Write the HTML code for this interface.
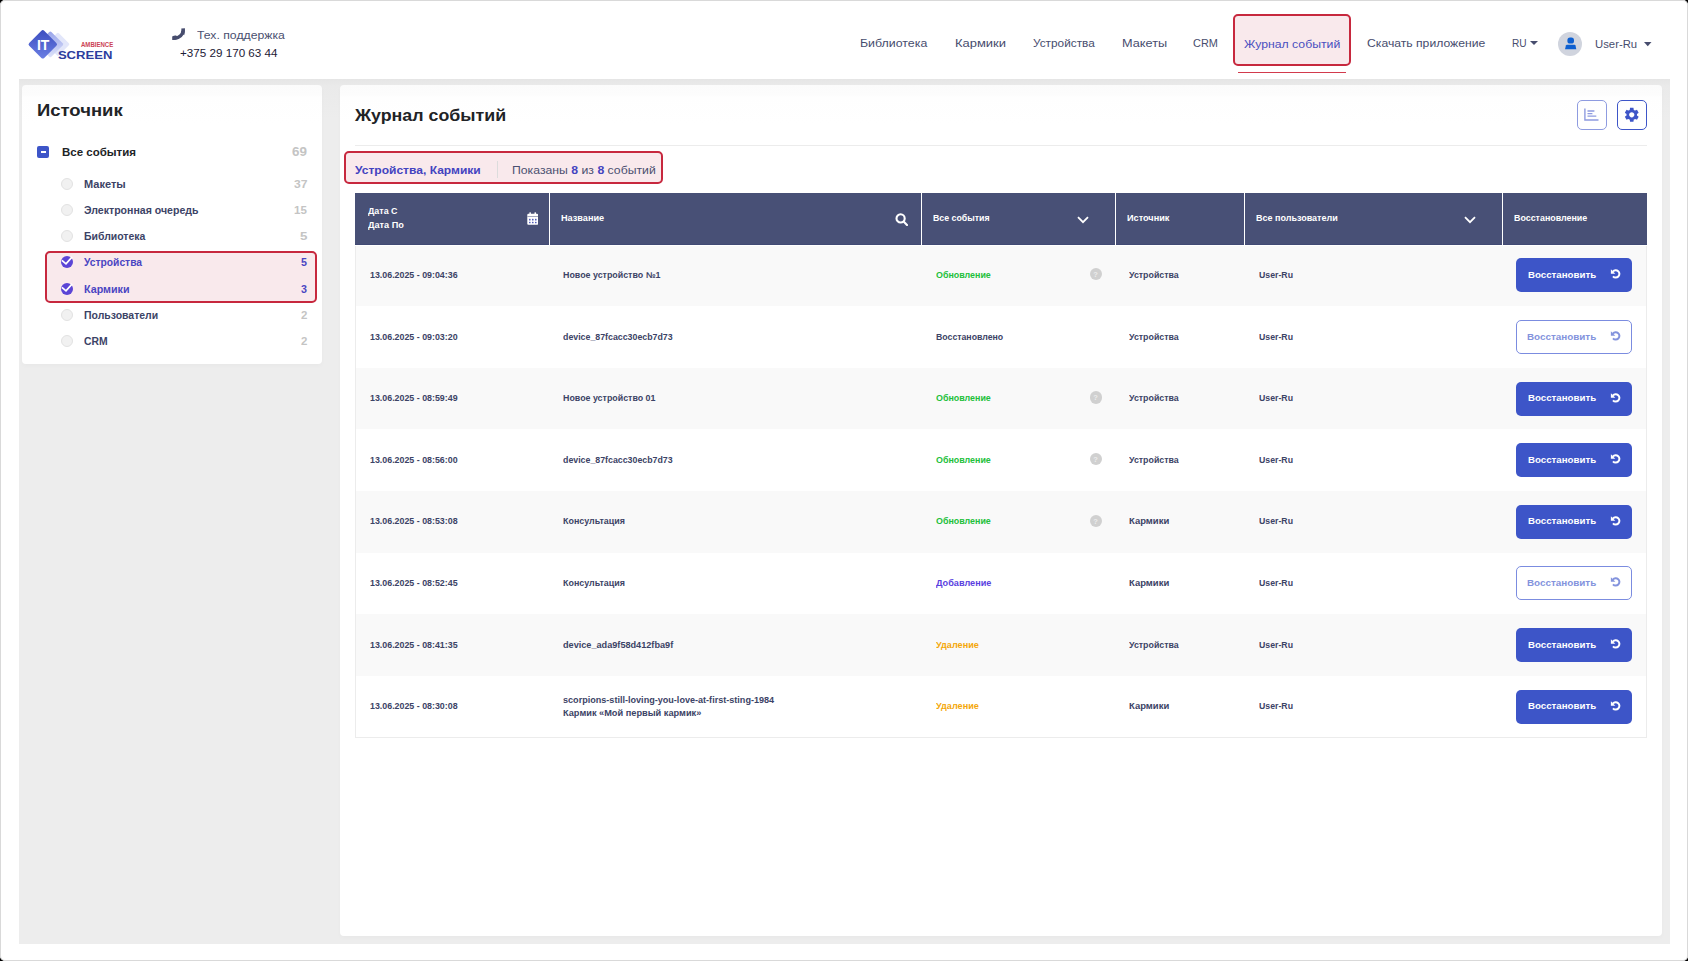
<!DOCTYPE html>
<html><head><meta charset="utf-8"><style>
html,body{margin:0;padding:0;}
body{width:1688px;height:961px;position:relative;overflow:hidden;background:#000;font-family:"Liberation Sans",sans-serif;}
.frame{position:absolute;left:0;top:0;width:1688px;height:961px;box-sizing:border-box;border:1px solid #d9d9d9;border-radius:5px;}
.a{position:absolute;}
.t{position:absolute;line-height:1;white-space:pre;transform-origin:0 0;}
.q{width:12.2px;height:12.2px;border-radius:50%;background:#d0d0d0;color:#ececec;font-size:7.5px;font-weight:700;line-height:13.4px;text-align:center;}
</style></head><body>
<div class="a" style="left:0;top:0;width:1688px;height:961px;background:#fff;border-radius:5px;"></div>
<div class="a" style="left:19px;top:79px;width:1651px;height:865px;background:linear-gradient(#e5e5e5,#eaeaea 7px,#ededed 40px);"></div>
<div class="a" style="left:22px;top:85px;width:300px;height:279px;background:linear-gradient(#fbfbfb,#fcfcfc 10px,#fefefe 12px,#fff 40px);border-radius:4px;box-shadow:0 2px 5px rgba(0,0,0,0.025);"></div>
<div class="a" style="left:340px;top:85px;width:1322px;height:851px;background:linear-gradient(#fbfbfb,#fcfcfc 10px,#fefefe 12px,#fff 40px);border-radius:4px;box-shadow:0 2px 5px rgba(0,0,0,0.025);"></div>
<svg class="a" style="left:20px;top:20px" width="100" height="50" viewBox="0 0 100 50">
<defs><linearGradient id="lg" x1="0" y1="0" x2="1" y2="1"><stop offset="0" stop-color="#3a4cbf"/><stop offset="1" stop-color="#6c80e4"/></linearGradient>
<linearGradient id="lg2" x1="0" y1="0" x2="1" y2="1"><stop offset="0" stop-color="#97a3ea"/><stop offset="1" stop-color="#dfe4fa"/></linearGradient></defs>
<rect x="29.4" y="15.8" width="17" height="17" rx="1.5" transform="rotate(45 37.9 24.3)" fill="#e2e6fa"/>
<rect x="20.8" y="14.9" width="19" height="19" rx="1.5" transform="rotate(45 30.3 24.4)" fill="url(#lg2)"/>
<rect x="12.2" y="13.7" width="21.2" height="21.2" rx="2" transform="rotate(45 22.8 24.3)" fill="url(#lg)"/>
<text x="16.9" y="29.6" font-family="Liberation Sans" font-weight="700" font-size="14.5" fill="#fff" textLength="12.4" lengthAdjust="spacingAndGlyphs">IT</text>
<text x="61" y="27" font-family="Liberation Sans" font-weight="700" font-size="6.6" fill="#cc4353" textLength="32.2" lengthAdjust="spacingAndGlyphs">AMBIENCE</text>
<text x="37.9" y="39.1" font-family="Liberation Sans" font-weight="700" font-size="11.4" fill="#2c3d9e" textLength="54.5" lengthAdjust="spacingAndGlyphs">SCREEN</text>
</svg>
<svg class="a" style="left:172px;top:28px" width="14" height="13" viewBox="0 0 14 13"><path d="M11 2.6 C11 6.6 7.5 10 2.6 10.3" stroke="#474d6e" stroke-width="3.4" fill="none"/><path d="M9.3 0.4 L12.8 0.3 C12.9 0.3 12.95 0.35 12.95 0.45 C13 3.2 12.9 5.3 12.1 7.2 L9.5 4.6 Z" fill="#474d6e"/><path d="M0.2 8.5 C1.4 7.9 3.2 7.4 4.2 7.5 L6.6 10.6 C4.8 11.6 2.7 12.2 0.6 12.1 C0.3 12.1 0.2 12 0.2 11.8 Z" fill="#474d6e"/></svg>
<div id="t0" class="t" style="left:196.58px;top:31.30px;font-size:10.39px;color:#4b5070;font-weight:400;transform:scaleX(1.1788);">Тех. поддержка</div>
<div id="t1" class="t" style="left:180.33px;top:47.59px;font-size:11.12px;color:#1c2035;font-weight:400;transform:scaleX(1.0486);">+375 29 170 63 44</div>
<div id="t2" class="t" style="left:859.99px;top:37.83px;font-size:10.83px;color:#474d6e;font-weight:400;transform:scaleX(1.1425);">Библиотека</div>
<div id="t3" class="t" style="left:954.98px;top:37.83px;font-size:10.83px;color:#474d6e;font-weight:400;transform:scaleX(1.1960);">Кармики</div>
<div id="t4" class="t" style="left:1032.87px;top:37.83px;font-size:10.83px;color:#474d6e;font-weight:400;transform:scaleX(1.0913);">Устройства</div>
<div id="t5" class="t" style="left:1121.68px;top:37.83px;font-size:10.83px;color:#474d6e;font-weight:400;transform:scaleX(1.1744);">Макеты</div>
<div id="t6" class="t" style="left:1193.00px;top:37.83px;font-size:10.83px;color:#474d6e;font-weight:400;transform:scaleX(1.0090);">CRM</div>
<div class="a" style="left:1233px;top:14px;width:118px;height:52px;box-sizing:border-box;border:2px solid #c7283e;border-radius:5px;background:#f9e9ec;"></div>
<div id="t7" class="t" style="left:1244.43px;top:39.13px;font-size:10.83px;color:#4a4fc0;font-weight:400;transform:scaleX(1.1310);">Журнал событий</div>
<div class="a" style="left:1238px;top:72px;width:108px;height:1px;background:#d23a4c;"></div>
<div id="t8" class="t" style="left:1366.58px;top:38.13px;font-size:10.83px;color:#474d6e;font-weight:400;transform:scaleX(1.1239);">Скачать приложение</div>
<div id="t9" class="t" style="left:1512.48px;top:38.13px;font-size:10.83px;color:#474d6e;font-weight:400;transform:scaleX(0.9367);">RU</div>
<svg class="a" style="left:1530px;top:41px" width="8" height="4"><path d="M0 0H8L4 4Z" fill="#474d6e"/></svg>
<div class="a" style="left:1558px;top:32px;width:24px;height:24px;border-radius:50%;background:#d0d4de;"></div>
<svg class="a" style="left:1564px;top:36.5px" width="14" height="14" viewBox="0 0 14 14"><rect x="3.4" y="0.6" width="6.6" height="6" rx="2.6" fill="#0d5fd0"/><path d="M2.9 7.7 H10.6 Q11.2 7.7 11.5 8.4 L12.3 12.2 H1.0 L1.9 8.4 Q2.3 7.7 2.9 7.7 Z" fill="#0d5fd0"/></svg>
<div id="t10" class="t" style="left:1595.00px;top:38.63px;font-size:10.83px;color:#474d6e;font-weight:400;transform:scaleX(1.0453);">User-Ru</div>
<svg class="a" style="left:1643.5px;top:42px" width="8" height="4.5"><path d="M0 0H7.5L3.75 4.3Z" fill="#474d6e"/></svg>
<div id="t11" class="t" style="left:37.14px;top:102.28px;font-size:16.21px;color:#212326;font-weight:700;transform:scaleX(1.1406);">Источник</div>
<div class="a" style="left:37px;top:145.6px;width:12px;height:12px;background:#3d55c8;border-radius:2px;"></div>
<div class="a" style="left:40.6px;top:151.3px;width:5.4px;height:1.6px;background:#fff;"></div>
<div id="t12" class="t" style="left:61.72px;top:148.02px;font-size:10.25px;color:#212326;font-weight:700;transform:scaleX(1.1203);">Все события</div>
<div id="t13" class="t" style="left:292.00px;top:144.99px;font-size:13.01px;color:#c4c4c4;font-weight:700;transform:scaleX(1.0293);">69</div>
<div class="a" style="left:45px;top:251px;width:272px;height:51.5px;box-sizing:border-box;border:2px solid #c7283e;border-radius:5px;background:#f9e9ec;"></div>
<div class="a" style="left:61px;top:178.1px;width:12px;height:12px;box-sizing:border-box;border-radius:50%;background:#f1f1f1;border:1px solid #e2e2e2;"></div>
<div id="t14" class="t" style="left:84.29px;top:180.15px;font-size:10.1px;color:#3c4366;font-weight:700;transform:scaleX(1.0899);">Макеты</div>
<div id="t15" class="t" style="left:294.08px;top:180.15px;font-size:10.1px;color:#c4c4c4;font-weight:700;transform:scaleX(1.2000);">37</div>
<div class="a" style="left:61px;top:204.25px;width:12px;height:12px;box-sizing:border-box;border-radius:50%;background:#f1f1f1;border:1px solid #e2e2e2;"></div>
<div id="t16" class="t" style="left:84.29px;top:206.30px;font-size:10.1px;color:#3c4366;font-weight:700;transform:scaleX(1.0461);">Электронная очередь</div>
<div id="t17" class="t" style="left:293.86px;top:206.30px;font-size:10.1px;color:#c4c4c4;font-weight:700;transform:scaleX(1.1412);">15</div>
<div class="a" style="left:61px;top:230.4px;width:12px;height:12px;box-sizing:border-box;border-radius:50%;background:#f1f1f1;border:1px solid #e2e2e2;"></div>
<div id="t18" class="t" style="left:84.29px;top:232.45px;font-size:10.1px;color:#3c4366;font-weight:700;transform:scaleX(1.0368);">Библиотека</div>
<div id="t19" class="t" style="left:300.10px;top:232.45px;font-size:10.1px;color:#c4c4c4;font-weight:700;transform:scaleX(1.3232);">5</div>
<svg class="a" style="left:61px;top:255.55px" width="12" height="12" viewBox="0 0 12 12"><circle cx="6" cy="6" r="6" fill="#5b45d6"/><path d="M0.9 4.3 L5 7.9 L11.2 0.9" stroke="#fff" stroke-width="1.7" fill="none"/></svg>
<div id="t20" class="t" style="left:84.29px;top:257.60px;font-size:10.1px;color:#4a45c2;font-weight:700;transform:scaleX(1.0184);">Устройства</div>
<div id="t21" class="t" style="left:301.24px;top:257.60px;font-size:10.1px;color:#4a45c2;font-weight:700;transform:scaleX(1.0585);">5</div>
<svg class="a" style="left:61px;top:282.70px" width="12" height="12" viewBox="0 0 12 12"><circle cx="6" cy="6" r="6" fill="#5b45d6"/><path d="M0.9 4.3 L5 7.9 L11.2 0.9" stroke="#fff" stroke-width="1.7" fill="none"/></svg>
<div id="t22" class="t" style="left:84.28px;top:284.75px;font-size:10.1px;color:#4a45c2;font-weight:700;transform:scaleX(1.0624);">Кармики</div>
<div id="t23" class="t" style="left:301.24px;top:284.75px;font-size:10.1px;color:#4a45c2;font-weight:700;transform:scaleX(1.0585);">3</div>
<div class="a" style="left:61px;top:308.85px;width:12px;height:12px;box-sizing:border-box;border-radius:50%;background:#f1f1f1;border:1px solid #e2e2e2;"></div>
<div id="t24" class="t" style="left:84.30px;top:310.90px;font-size:10.1px;color:#3c4366;font-weight:700;transform:scaleX(1.0367);">Пользователи</div>
<div id="t25" class="t" style="left:301.04px;top:310.90px;font-size:10.1px;color:#c4c4c4;font-weight:700;transform:scaleX(1.1341);">2</div>
<div class="a" style="left:61px;top:335.0px;width:12px;height:12px;box-sizing:border-box;border-radius:50%;background:#f1f1f1;border:1px solid #e2e2e2;"></div>
<div id="t26" class="t" style="left:84.29px;top:337.05px;font-size:10.1px;color:#3c4366;font-weight:700;transform:scaleX(1.0264);">CRM</div>
<div id="t27" class="t" style="left:301.04px;top:337.05px;font-size:10.1px;color:#c4c4c4;font-weight:700;transform:scaleX(1.1341);">2</div>
<div id="t28" class="t" style="left:355.00px;top:107.57px;font-size:16.93px;color:#212326;font-weight:700;transform:scaleX(1.0518);">Журнал событий</div>
<div class="a" style="left:355px;top:145px;width:1292px;height:1px;background:#ececec;"></div>
<div class="a" style="left:1577px;top:100px;width:30px;height:30px;box-sizing:border-box;border:1px solid #8e9be0;border-radius:5px;"></div>
<svg class="a" style="left:1584px;top:108px" width="15" height="13" viewBox="0 0 15 13"><path d="M0.9 0.6V12H14.5" stroke="#8e9be0" stroke-width="1.4" fill="none"/><path d="M3.5 3H10.4M3.5 5.6H8.4M3.5 8.2H12.3" stroke="#8e9be0" stroke-width="1.3"/></svg>
<div class="a" style="left:1617px;top:100px;width:30px;height:30px;box-sizing:border-box;border:1.5px solid #3d55c8;border-radius:5px;"></div>
<svg class="a" style="left:1623.2px;top:106.2px" width="17.5" height="17.5" viewBox="0 0 24 24"><path fill="#3d55c8" d="M19.14 12.94c.04-.3.06-.61.06-.94 0-.32-.02-.64-.07-.94l2.03-1.58c.18-.14.23-.41.12-.61l-1.92-3.32c-.12-.22-.37-.29-.59-.22l-2.39.96c-.5-.38-1.03-.7-1.620-.94l-.36-2.54c-.04-.24-.24-.41-.48-.41h-3.84c-.24 0-.43.17-.47.41l-.36 2.54c-.59.24-1.13.57-1.62.94l-2.390-.96c-.22-.08-.47 0-.59.22L2.74 8.87c-.12.21-.08.47.12.61l2.03 1.58c-.05.3-.09.63-.09.94s.02.64.07.94l-2.03 1.58c-.18.14-.23.41-.12.61l1.92 3.32c.12.22.37.29.59.22l2.39-.96c.5.38 1.03.7 1.62.94l.36 2.54c.05.24.24.41.48.41h3.84c.24 0 .44-.17.47-.41l.36-2.54c.59-.24 1.13-.56 1.62-.94l2.39.96c.22.08.47 0 .59-.22l1.92-3.32c.12-.22.07-.47-.12-.61l-2.01-1.58zM12 15.6c-1.98 0-3.6-1.62-3.6-3.6s1.62-3.6 3.6-3.6 3.6 1.62 3.6 3.6-1.62 3.6-3.6 3.6z"/></svg>
<div class="a" style="left:343.5px;top:151px;width:319.5px;height:32.5px;box-sizing:border-box;border:2px solid #c7283e;border-radius:5px;background:#f9e9ec;"></div>
<div id="t29" class="t" style="left:355.31px;top:166.05px;font-size:10.1px;color:#4343c0;font-weight:700;transform:scaleX(1.1925);">Устройства, Кармики</div>
<div class="a" style="left:497px;top:161px;width:1px;height:16.5px;background:#dcdcdc;"></div>
<div id="t30" class="t" style="left:511.56px;top:164.86px;font-size:10.68px;color:#4b5070;font-weight:400;transform:scaleX(1.1473);">Показаны <b style="color:#4343c0">8</b> из <b style="color:#4343c0">8</b> событий</div>
<div class="a" style="left:355px;top:193px;width:1292px;height:51px;background:#485076;"></div>
<div class="a" style="left:355px;top:244px;width:1292px;height:1px;background:#414a74;"></div>
<div class="a" style="left:549px;top:193px;width:1.3px;height:52px;background:#fff;"></div>
<div class="a" style="left:921px;top:193px;width:1.3px;height:52px;background:#fff;"></div>
<div class="a" style="left:1115px;top:193px;width:1.3px;height:52px;background:#fff;"></div>
<div class="a" style="left:1244px;top:193px;width:1.3px;height:52px;background:#fff;"></div>
<div class="a" style="left:1502px;top:193px;width:1.3px;height:52px;background:#fff;"></div>
<div id="t31" class="t" style="left:367.81px;top:206.90px;font-size:8.5px;color:#ffffff;font-weight:700;transform:scaleX(1.0489);">Дата С</div>
<div id="t32" class="t" style="left:367.82px;top:220.60px;font-size:8.5px;color:#ffffff;font-weight:700;transform:scaleX(1.0766);">Дата По</div>
<div id="t33" class="t" style="left:561.29px;top:214.00px;font-size:8.5px;color:#ffffff;font-weight:700;transform:scaleX(1.0750);">Название</div>
<div id="t34" class="t" style="left:933.10px;top:214.00px;font-size:8.5px;color:#ffffff;font-weight:700;transform:scaleX(1.0329);">Все события</div>
<div id="t35" class="t" style="left:1127.00px;top:214.00px;font-size:8.5px;color:#ffffff;font-weight:700;transform:scaleX(1.0750);">Источник</div>
<div id="t36" class="t" style="left:1256.29px;top:214.00px;font-size:8.5px;color:#ffffff;font-weight:700;transform:scaleX(1.0572);">Все пользователи</div>
<div id="t37" class="t" style="left:1514.11px;top:214.00px;font-size:8.5px;color:#ffffff;font-weight:700;transform:scaleX(1.0452);">Восстановление</div>
<svg class="a" style="left:526.7px;top:212px" width="11.4" height="13" viewBox="0 0 12 13" preserveAspectRatio="none"><rect x="0.3" y="1.8" width="11.4" height="11" rx="1.1" fill="#fff"/><rect x="2.5" y="0.2" width="1.6" height="3" rx="0.6" fill="#fff"/><rect x="7.9" y="0.2" width="1.6" height="3" rx="0.6" fill="#fff"/><rect x="0.3" y="4.2" width="11.4" height="0.8" fill="#8d92ad"/><g fill="#4b58b8"><rect x="2.15" y="6.8" width="1.6" height="1.6" rx="0.5"/><rect x="5.3" y="6.8" width="1.6" height="1.6" rx="0.5"/><rect x="8.45" y="6.8" width="1.6" height="1.6" rx="0.5"/><rect x="2.15" y="9.7" width="1.6" height="1.6" rx="0.5"/><rect x="5.3" y="9.7" width="1.6" height="1.6" rx="0.5"/><rect x="8.45" y="9.7" width="1.6" height="1.6" rx="0.5"/></g></svg>
<svg class="a" style="left:895px;top:212.9px" width="13" height="13" viewBox="0 0 13 13"><circle cx="5.6" cy="5.4" r="4.1" stroke="#fff" stroke-width="2.1" fill="none"/><path d="M8.6 8.5L12 12" stroke="#fff" stroke-width="2.1" stroke-linecap="round"/></svg>
<svg class="a" style="left:1076.7px;top:215.9px" width="12" height="8" viewBox="0 0 12 8"><path d="M1 1.2L6 6.2L11 1.2" stroke="#fff" stroke-width="1.8" fill="none"/></svg>
<svg class="a" style="left:1463.9px;top:215.9px" width="12" height="8" viewBox="0 0 12 8"><path d="M1 1.2L6 6.2L11 1.2" stroke="#fff" stroke-width="1.8" fill="none"/></svg>
<div class="a" style="left:355px;top:246px;width:1292px;height:492px;box-sizing:border-box;border:1px solid #ececec;border-top:none;"></div>
<div class="a" style="left:356px;top:246px;width:1290px;height:60px;background:#f9f9f9;"></div>
<div id="t38" class="t" style="left:370.29px;top:271.18px;font-size:8.65px;color:#3c4366;font-weight:700;transform:scaleX(1.0260);">13.06.2025 - 09:04:36</div>
<div id="t39" class="t" style="left:563.11px;top:271.18px;font-size:8.65px;color:#3c4366;font-weight:700;transform:scaleX(1.0274);">Новое устройство №1</div>
<div id="t40" class="t" style="left:936.30px;top:271.18px;font-size:8.65px;color:#22c03b;font-weight:700;transform:scaleX(1.0304);">Обновление</div>
<div class="a q" style="left:1089.5px;top:268.25px">?</div>
<div id="t41" class="t" style="left:1129.40px;top:271.18px;font-size:8.65px;color:#3c4366;font-weight:700;transform:scaleX(1.0204);">Устройства</div>
<div id="t42" class="t" style="left:1258.81px;top:271.18px;font-size:8.65px;color:#3c4366;font-weight:700;transform:scaleX(1.0127);">User-Ru</div>
<div class="a" style="left:1516px;top:258px;width:116px;height:34px;background:#3d55c8;border-radius:5px;"></div>
<div id="t43" class="t" style="left:1528.42px;top:271.06px;font-size:8.79px;color:#fff;font-weight:700;transform:scaleX(1.1034);">Восстановить</div>
<svg class="a" style="left:1609.8px;top:269.30px" width="11" height="10" viewBox="0 0 11 10"><path d="M2.9 2.6 A3.65 3.65 0 1 1 3.0 7.3" stroke="#fff" stroke-width="2" fill="none"/><path d="M0.9 0.3 L0.9 4.7 L5.3 4.7 Z" fill="#fff"/></svg>
<div id="t44" class="t" style="left:370.29px;top:333.18px;font-size:8.65px;color:#3c4366;font-weight:700;transform:scaleX(1.0260);">13.06.2025 - 09:03:20</div>
<div id="t45" class="t" style="left:563.11px;top:333.18px;font-size:8.65px;color:#3c4366;font-weight:700;transform:scaleX(1.0204);">device_87fcacc30ecb7d73</div>
<div id="t46" class="t" style="left:936.30px;top:333.18px;font-size:8.65px;color:#3c4366;font-weight:700;transform:scaleX(1.0123);">Восстановлено</div>
<div id="t47" class="t" style="left:1129.40px;top:333.18px;font-size:8.65px;color:#3c4366;font-weight:700;transform:scaleX(1.0204);">Устройства</div>
<div id="t48" class="t" style="left:1258.81px;top:333.18px;font-size:8.65px;color:#3c4366;font-weight:700;transform:scaleX(1.0127);">User-Ru</div>
<div class="a" style="left:1516px;top:320px;width:116px;height:34px;box-sizing:border-box;border:1px solid #7b8ce0;border-radius:5px;background:#fff;"></div>
<div id="t49" class="t" style="left:1527.30px;top:333.06px;font-size:8.79px;color:#8393dd;font-weight:700;transform:scaleX(1.1215);">Восстановить</div>
<svg class="a" style="left:1609.8px;top:331.30px" width="11" height="10" viewBox="0 0 11 10"><path d="M2.9 2.6 A3.65 3.65 0 1 1 3.0 7.3" stroke="#8393dd" stroke-width="2" fill="none"/><path d="M0.9 0.3 L0.9 4.7 L5.3 4.7 Z" fill="#8393dd"/></svg>
<div class="a" style="left:356px;top:368px;width:1290px;height:61px;background:#f9f9f9;"></div>
<div id="t50" class="t" style="left:370.29px;top:394.18px;font-size:8.65px;color:#3c4366;font-weight:700;transform:scaleX(1.0260);">13.06.2025 - 08:59:49</div>
<div id="t51" class="t" style="left:563.11px;top:394.18px;font-size:8.65px;color:#3c4366;font-weight:700;transform:scaleX(1.0265);">Новое устройство 01</div>
<div id="t52" class="t" style="left:936.30px;top:394.18px;font-size:8.65px;color:#22c03b;font-weight:700;transform:scaleX(1.0304);">Обновление</div>
<div class="a q" style="left:1089.5px;top:391.45px">?</div>
<div id="t53" class="t" style="left:1129.40px;top:394.18px;font-size:8.65px;color:#3c4366;font-weight:700;transform:scaleX(1.0204);">Устройства</div>
<div id="t54" class="t" style="left:1258.81px;top:394.18px;font-size:8.65px;color:#3c4366;font-weight:700;transform:scaleX(1.0127);">User-Ru</div>
<div class="a" style="left:1516px;top:382px;width:116px;height:34px;background:#3d55c8;border-radius:5px;"></div>
<div id="t55" class="t" style="left:1528.42px;top:394.06px;font-size:8.79px;color:#fff;font-weight:700;transform:scaleX(1.1034);">Восстановить</div>
<svg class="a" style="left:1609.8px;top:393.30px" width="11" height="10" viewBox="0 0 11 10"><path d="M2.9 2.6 A3.65 3.65 0 1 1 3.0 7.3" stroke="#fff" stroke-width="2" fill="none"/><path d="M0.9 0.3 L0.9 4.7 L5.3 4.7 Z" fill="#fff"/></svg>
<div id="t56" class="t" style="left:370.29px;top:456.18px;font-size:8.65px;color:#3c4366;font-weight:700;transform:scaleX(1.0260);">13.06.2025 - 08:56:00</div>
<div id="t57" class="t" style="left:563.11px;top:456.18px;font-size:8.65px;color:#3c4366;font-weight:700;transform:scaleX(1.0204);">device_87fcacc30ecb7d73</div>
<div id="t58" class="t" style="left:936.30px;top:456.18px;font-size:8.65px;color:#22c03b;font-weight:700;transform:scaleX(1.0304);">Обновление</div>
<div class="a q" style="left:1089.5px;top:453.05px">?</div>
<div id="t59" class="t" style="left:1129.40px;top:456.18px;font-size:8.65px;color:#3c4366;font-weight:700;transform:scaleX(1.0204);">Устройства</div>
<div id="t60" class="t" style="left:1258.81px;top:456.18px;font-size:8.65px;color:#3c4366;font-weight:700;transform:scaleX(1.0127);">User-Ru</div>
<div class="a" style="left:1516px;top:443px;width:116px;height:34px;background:#3d55c8;border-radius:5px;"></div>
<div id="t61" class="t" style="left:1528.42px;top:456.06px;font-size:8.79px;color:#fff;font-weight:700;transform:scaleX(1.1034);">Восстановить</div>
<svg class="a" style="left:1609.8px;top:454.30px" width="11" height="10" viewBox="0 0 11 10"><path d="M2.9 2.6 A3.65 3.65 0 1 1 3.0 7.3" stroke="#fff" stroke-width="2" fill="none"/><path d="M0.9 0.3 L0.9 4.7 L5.3 4.7 Z" fill="#fff"/></svg>
<div class="a" style="left:356px;top:491px;width:1290px;height:62px;background:#f9f9f9;"></div>
<div id="t62" class="t" style="left:370.29px;top:517.18px;font-size:8.65px;color:#3c4366;font-weight:700;transform:scaleX(1.0260);">13.06.2025 - 08:53:08</div>
<div id="t63" class="t" style="left:563.11px;top:517.18px;font-size:8.65px;color:#3c4366;font-weight:700;transform:scaleX(1.0333);">Консультация</div>
<div id="t64" class="t" style="left:936.30px;top:517.18px;font-size:8.65px;color:#22c03b;font-weight:700;transform:scaleX(1.0304);">Обновление</div>
<div class="a q" style="left:1089.5px;top:514.65px">?</div>
<div id="t65" class="t" style="left:1129.42px;top:517.18px;font-size:8.65px;color:#3c4366;font-weight:700;transform:scaleX(1.0981);">Кармики</div>
<div id="t66" class="t" style="left:1258.81px;top:517.18px;font-size:8.65px;color:#3c4366;font-weight:700;transform:scaleX(1.0127);">User-Ru</div>
<div class="a" style="left:1516px;top:505px;width:116px;height:34px;background:#3d55c8;border-radius:5px;"></div>
<div id="t67" class="t" style="left:1528.42px;top:517.06px;font-size:8.79px;color:#fff;font-weight:700;transform:scaleX(1.1034);">Восстановить</div>
<svg class="a" style="left:1609.8px;top:516.30px" width="11" height="10" viewBox="0 0 11 10"><path d="M2.9 2.6 A3.65 3.65 0 1 1 3.0 7.3" stroke="#fff" stroke-width="2" fill="none"/><path d="M0.9 0.3 L0.9 4.7 L5.3 4.7 Z" fill="#fff"/></svg>
<div id="t68" class="t" style="left:370.29px;top:579.18px;font-size:8.65px;color:#3c4366;font-weight:700;transform:scaleX(1.0257);">13.06.2025 - 08:52:45</div>
<div id="t69" class="t" style="left:563.11px;top:579.18px;font-size:8.65px;color:#3c4366;font-weight:700;transform:scaleX(1.0333);">Консультация</div>
<div id="t70" class="t" style="left:936.29px;top:579.18px;font-size:8.65px;color:#5a3fe0;font-weight:700;transform:scaleX(1.0577);">Добавление</div>
<div id="t71" class="t" style="left:1129.42px;top:579.18px;font-size:8.65px;color:#3c4366;font-weight:700;transform:scaleX(1.0981);">Кармики</div>
<div id="t72" class="t" style="left:1258.81px;top:579.18px;font-size:8.65px;color:#3c4366;font-weight:700;transform:scaleX(1.0127);">User-Ru</div>
<div class="a" style="left:1516px;top:566px;width:116px;height:34px;box-sizing:border-box;border:1px solid #7b8ce0;border-radius:5px;background:#fff;"></div>
<div id="t73" class="t" style="left:1527.30px;top:579.06px;font-size:8.79px;color:#8393dd;font-weight:700;transform:scaleX(1.1215);">Восстановить</div>
<svg class="a" style="left:1609.8px;top:577.30px" width="11" height="10" viewBox="0 0 11 10"><path d="M2.9 2.6 A3.65 3.65 0 1 1 3.0 7.3" stroke="#8393dd" stroke-width="2" fill="none"/><path d="M0.9 0.3 L0.9 4.7 L5.3 4.7 Z" fill="#8393dd"/></svg>
<div class="a" style="left:356px;top:614px;width:1290px;height:62px;background:#f9f9f9;"></div>
<div id="t74" class="t" style="left:370.29px;top:641.18px;font-size:8.65px;color:#3c4366;font-weight:700;transform:scaleX(1.0260);">13.06.2025 - 08:41:35</div>
<div id="t75" class="t" style="left:563.11px;top:641.18px;font-size:8.65px;color:#3c4366;font-weight:700;transform:scaleX(1.0591);">device_ada9f58d412fba9f</div>
<div id="t76" class="t" style="left:936.29px;top:641.18px;font-size:8.65px;color:#f4a70a;font-weight:700;transform:scaleX(1.0553);">Удаление</div>
<div id="t77" class="t" style="left:1129.40px;top:641.18px;font-size:8.65px;color:#3c4366;font-weight:700;transform:scaleX(1.0204);">Устройства</div>
<div id="t78" class="t" style="left:1258.81px;top:641.18px;font-size:8.65px;color:#3c4366;font-weight:700;transform:scaleX(1.0127);">User-Ru</div>
<div class="a" style="left:1516px;top:628px;width:116px;height:34px;background:#3d55c8;border-radius:5px;"></div>
<div id="t79" class="t" style="left:1528.42px;top:641.06px;font-size:8.79px;color:#fff;font-weight:700;transform:scaleX(1.1034);">Восстановить</div>
<svg class="a" style="left:1609.8px;top:639.30px" width="11" height="10" viewBox="0 0 11 10"><path d="M2.9 2.6 A3.65 3.65 0 1 1 3.0 7.3" stroke="#fff" stroke-width="2" fill="none"/><path d="M0.9 0.3 L0.9 4.7 L5.3 4.7 Z" fill="#fff"/></svg>
<div id="t80" class="t" style="left:370.29px;top:702.18px;font-size:8.65px;color:#3c4366;font-weight:700;transform:scaleX(1.0260);">13.06.2025 - 08:30:08</div>
<div id="t81" class="t" style="left:563.41px;top:696.18px;font-size:8.65px;color:#3c4366;font-weight:700;transform:scaleX(1.0515);">scorpions-still-loving-you-love-at-first-sting-1984</div>
<div id="t82" class="t" style="left:563.41px;top:709.18px;font-size:8.65px;color:#3c4366;font-weight:700;transform:scaleX(1.0693);">Кармик «Мой первый кармик»</div>
<div id="t83" class="t" style="left:936.29px;top:702.18px;font-size:8.65px;color:#f4a70a;font-weight:700;transform:scaleX(1.0553);">Удаление</div>
<div id="t84" class="t" style="left:1129.42px;top:702.18px;font-size:8.65px;color:#3c4366;font-weight:700;transform:scaleX(1.0981);">Кармики</div>
<div id="t85" class="t" style="left:1258.81px;top:702.18px;font-size:8.65px;color:#3c4366;font-weight:700;transform:scaleX(1.0127);">User-Ru</div>
<div class="a" style="left:1516px;top:690px;width:116px;height:34px;background:#3d55c8;border-radius:5px;"></div>
<div id="t86" class="t" style="left:1528.42px;top:702.06px;font-size:8.79px;color:#fff;font-weight:700;transform:scaleX(1.1034);">Восстановить</div>
<svg class="a" style="left:1609.8px;top:701.30px" width="11" height="10" viewBox="0 0 11 10"><path d="M2.9 2.6 A3.65 3.65 0 1 1 3.0 7.3" stroke="#fff" stroke-width="2" fill="none"/><path d="M0.9 0.3 L0.9 4.7 L5.3 4.7 Z" fill="#fff"/></svg>
<div class="frame"></div>
</body></html>
